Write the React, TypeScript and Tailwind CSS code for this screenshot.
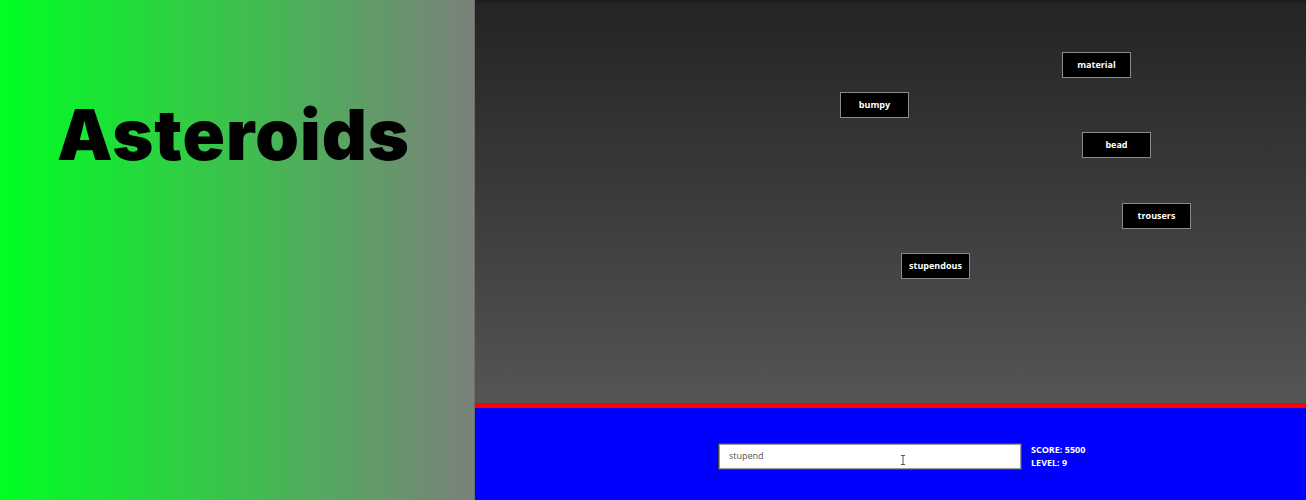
const words = [
  { text: 'material', left: 587, top: 49 },
  { text: 'bumpy', left: 365, top: 89 },
  { text: 'bead', left: 607, top: 129 },
  { text: 'trousers', left: 647, top: 200 },
  { text: 'stupendous', left: 426, top: 250 },
];

function Asteroid({ text, left, top }: { text: string; left: number; top: number }) {
  return (
    <div
      className="absolute w-[69px] h-[26px] bg-black border border-[#8a8a8a] flex items-center justify-center text-white text-[9px] font-bold"
      style={{ left, top }}
    >
      {text}
    </div>
  );
}

export default function App() {
  return (
    <div className="flex w-[1306px] h-[500px] overflow-hidden font-['Open_Sans',sans-serif]">
      <div className="w-[475px] shrink-0 bg-linear-to-r/srgb from-[#00ff22] to-[#7b807b] border-r border-[#6a6e6a] pl-[57px] pt-[100px]">
        <h1 className="font-['Inter',sans-serif] font-black text-[70px] leading-[1] tracking-[1px] text-black">
          Asteroids
        </h1>
      </div>
      <div className="flex-1 flex flex-col">
        <div className="h-[3px] bg-[#1b1b22]" />
        <div className="relative flex-1 bg-gradient-to-b from-[#242424] to-[#555555]">
          {words.map((w) => (
            <Asteroid key={w.text} {...w} />
          ))}
        </div>
        <div className="h-[5px] bg-[#ff0000]" />
        <div className="h-[92px] bg-[#0000ff] flex items-center pl-[243px] pt-[4px] gap-[9px]">
          <div className="relative w-[304px] h-[27px] bg-white border border-[#444] rounded-[2px] shadow-[inset_0_0_0_1px_#9a9a9a] flex items-center pl-[10px] text-[9px] text-[#555]">
            stupend
            <svg className="absolute left-[181px] top-[11px]" width="6" height="10" viewBox="0 0 6 10">
              <path d="M1 0.5h4M3 0.5v9M1 9.5h4" stroke="#555" strokeWidth="1" fill="none" />
            </svg>
          </div>
          <div className="text-white text-[9px] font-bold leading-[13px]">
            <div>SCORE: 5500</div>
            <div>LEVEL: 9</div>
          </div>
        </div>
      </div>
    </div>
  );
}
